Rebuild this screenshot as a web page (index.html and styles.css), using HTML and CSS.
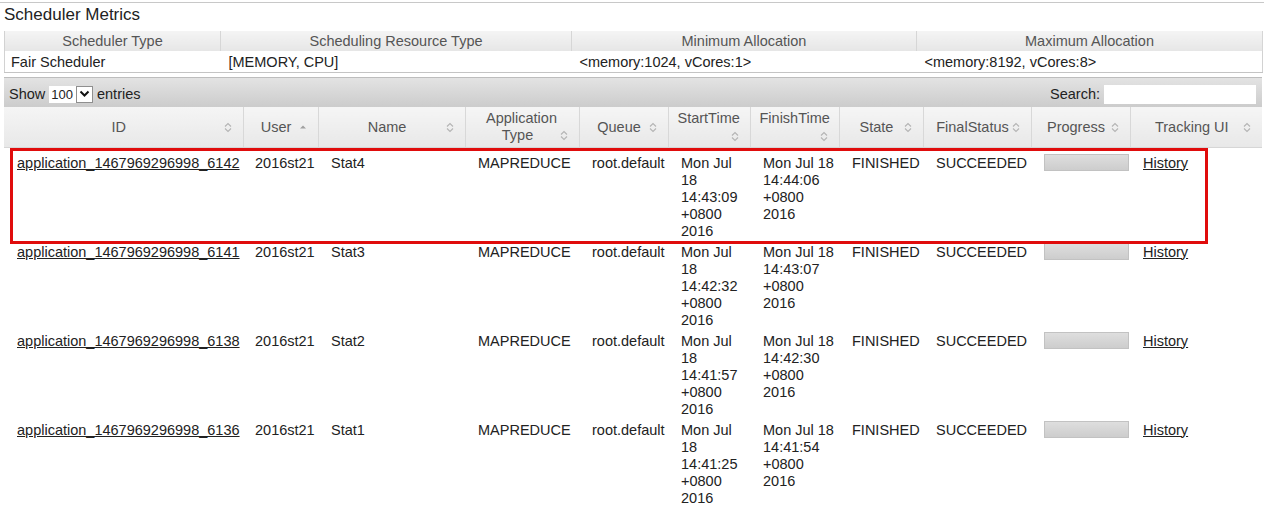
FILE: index.html
```html
<!DOCTYPE html>
<html>
<head>
<meta charset="utf-8">
<title>Scheduler</title>
<link rel="stylesheet" href="styles.css">
</head>
<body>
<div class="topline"></div>
<div class="wrap">
  <h3 class="title">Scheduler Metrics</h3>
  <table class="metrics">
    <colgroup><col class="m1"><col class="m2"><col class="m3"><col class="m4"></colgroup>
    <thead>
      <tr><th>Scheduler Type</th><th>Scheduling Resource Type</th><th>Minimum Allocation</th><th>Maximum Allocation</th></tr>
    </thead>
    <tbody>
      <tr><td>Fair Scheduler</td><td>[MEMORY, CPU]</td><td>&lt;memory:1024, vCores:1&gt;</td><td>&lt;memory:8192, vCores:8&gt;</td></tr>
    </tbody>
  </table>

  <div class="toolbar">
    <div class="len">Show <span class="sel"><span class="sel-val">100</span><span class="sel-btn"><svg width="11" height="8" viewBox="0 0 11 8"><path d="M1.5 1.5 L5.5 5.5 L9.5 1.5" fill="none" stroke="#111" stroke-width="2"/></svg></span></span> entries</div>
    <div class="search">Search: <span class="search-box"></span></div>
  </div>

  <div class="grid">
    <table class="apps">
      <colgroup>
        <col class="c-id"><col class="c-user"><col class="c-name"><col class="c-type"><col class="c-queue"><col class="c-start"><col class="c-finish"><col class="c-state"><col class="c-final"><col class="c-prog"><col class="c-track">
      </colgroup>
      <thead>
        <tr>
          <th><span class="sort fr"><svg width="8" height="11" viewBox="0 0 8 11"><path d="M1 4.5 L4 1.5 L7 4.5 M1 6.5 L4 9.5 L7 6.5" fill="none" stroke="#b4b4b4" stroke-width="1.1"/></svg></span>ID</th>
          <th><span class="sort fr"><svg width="8" height="11" viewBox="0 0 8 11"><path d="M1 6.5 L4 3.5 L7 6.5 Z" fill="#a0a0a0"/></svg></span>User</th>
          <th><span class="sort fr"><svg width="8" height="11" viewBox="0 0 8 11"><path d="M1 4.5 L4 1.5 L7 4.5 M1 6.5 L4 9.5 L7 6.5" fill="none" stroke="#b4b4b4" stroke-width="1.1"/></svg></span>Name</th>
          <th>Application<br><span class="sort fr"><svg width="8" height="11" viewBox="0 0 8 11"><path d="M1 4.5 L4 1.5 L7 4.5 M1 6.5 L4 9.5 L7 6.5" fill="none" stroke="#b4b4b4" stroke-width="1.1"/></svg></span>Type</th>
          <th><span class="sort fr"><svg width="8" height="11" viewBox="0 0 8 11"><path d="M1 4.5 L4 1.5 L7 4.5 M1 6.5 L4 9.5 L7 6.5" fill="none" stroke="#b4b4b4" stroke-width="1.1"/></svg></span>Queue</th>
          <th class="narrow">StartTime<span class="sort blk"><svg width="8" height="11" viewBox="0 0 8 11"><path d="M1 4.5 L4 1.5 L7 4.5 M1 6.5 L4 9.5 L7 6.5" fill="none" stroke="#b4b4b4" stroke-width="1.1"/></svg></span></th>
          <th class="narrow">FinishTime<span class="sort blk"><svg width="8" height="11" viewBox="0 0 8 11"><path d="M1 4.5 L4 1.5 L7 4.5 M1 6.5 L4 9.5 L7 6.5" fill="none" stroke="#b4b4b4" stroke-width="1.1"/></svg></span></th>
          <th><span class="sort fr"><svg width="8" height="11" viewBox="0 0 8 11"><path d="M1 4.5 L4 1.5 L7 4.5 M1 6.5 L4 9.5 L7 6.5" fill="none" stroke="#b4b4b4" stroke-width="1.1"/></svg></span>State</th>
          <th><span class="sort fr"><svg width="8" height="11" viewBox="0 0 8 11"><path d="M1 4.5 L4 1.5 L7 4.5 M1 6.5 L4 9.5 L7 6.5" fill="none" stroke="#b4b4b4" stroke-width="1.1"/></svg></span>FinalStatus</th>
          <th><span class="sort fr"><svg width="8" height="11" viewBox="0 0 8 11"><path d="M1 4.5 L4 1.5 L7 4.5 M1 6.5 L4 9.5 L7 6.5" fill="none" stroke="#b4b4b4" stroke-width="1.1"/></svg></span>Progress</th>
          <th><span class="sort fr"><svg width="8" height="11" viewBox="0 0 8 11"><path d="M1 4.5 L4 1.5 L7 4.5 M1 6.5 L4 9.5 L7 6.5" fill="none" stroke="#b4b4b4" stroke-width="1.1"/></svg></span>Tracking UI</th>
        </tr>
      </thead>
      <tbody>
        <tr class="first">
          <td><a href="#">application_1467969296998_6142</a></td>
          <td>2016st21</td>
          <td>Stat4</td>
          <td>MAPREDUCE</td>
          <td>root.default</td>
          <td>Mon Jul 18 14:43:09 +0800 2016</td>
          <td>Mon Jul 18 14:44:06 +0800 2016</td>
          <td>FINISHED</td>
          <td>SUCCEEDED</td>
          <td><div class="bar"></div></td>
          <td><a href="#">History</a></td>
        </tr>
        <tr>
          <td><a href="#">application_1467969296998_6141</a></td>
          <td>2016st21</td>
          <td>Stat3</td>
          <td>MAPREDUCE</td>
          <td>root.default</td>
          <td>Mon Jul 18 14:42:32 +0800 2016</td>
          <td>Mon Jul 18 14:43:07 +0800 2016</td>
          <td>FINISHED</td>
          <td>SUCCEEDED</td>
          <td><div class="bar"></div></td>
          <td><a href="#">History</a></td>
        </tr>
        <tr>
          <td><a href="#">application_1467969296998_6138</a></td>
          <td>2016st21</td>
          <td>Stat2</td>
          <td>MAPREDUCE</td>
          <td>root.default</td>
          <td>Mon Jul 18 14:41:57 +0800 2016</td>
          <td>Mon Jul 18 14:42:30 +0800 2016</td>
          <td>FINISHED</td>
          <td>SUCCEEDED</td>
          <td><div class="bar"></div></td>
          <td><a href="#">History</a></td>
        </tr>
        <tr>
          <td><a href="#">application_1467969296998_6136</a></td>
          <td>2016st21</td>
          <td>Stat1</td>
          <td>MAPREDUCE</td>
          <td>root.default</td>
          <td>Mon Jul 18 14:41:25 +0800 2016</td>
          <td>Mon Jul 18 14:41:54 +0800 2016</td>
          <td>FINISHED</td>
          <td>SUCCEEDED</td>
          <td><div class="bar"></div></td>
          <td><a href="#">History</a></td>
        </tr>
      </tbody>
    </table>
    <div class="highlight"></div>
  </div>
</div>
</body>
</html>
```
FILE: styles.css
```css
html, body {
  margin: 0;
  padding: 0;
  background: #fff;
  overflow: hidden;
}
body {
  font-family: "Liberation Sans", Arial, sans-serif;
  font-size: 14.5px;
  color: #222;
}
.topline {
  margin-top: 2px;
  width: 1264px;
  border-top: 1px solid #c8c8c8;
}
.wrap {
  width: 1258px;
  margin-left: 4px;
}
.title {
  margin: 0;
  padding: 3px 0 7px 0;
  font-size: 17px;
  line-height: 18px;
  font-weight: normal;
  color: #222;
}

/* metrics table */
.metrics {
  width: 1258px;
  table-layout: fixed;
  border-collapse: collapse;
  border-left: 1px solid #d2d2d2;
  border-right: 1px solid #d2d2d2;
}
.m1 { width: 216px; }
.m2 { width: 351px; }
.m3 { width: 345px; }
.m4 { width: 346px; }
.metrics th {
  height: 20px;
  padding: 0;
  font-weight: normal;
  color: #555;
  line-height: 19px;
  text-align: center;
  background: linear-gradient(#f4f4f4, #e6e6e6);
  border-right: 1px solid #d6d6d6;
}
.metrics td {
  height: 21px;
  padding: 0 8px;
  line-height: 20px;
  border-bottom: 1px solid #c4c4c4;
  color: #222;
}
.metrics td:first-child { padding-left: 6px; }

/* toolbar */
.toolbar {
  margin-top: 4px;
  height: 30px;
  box-sizing: border-box;
  display: flex;
  align-items: center;
  justify-content: space-between;
  padding: 3px 6px 0 5px;
  background: linear-gradient(#e3e3e3, #cccccc);
  border-top: 1px solid #bdbdbd;
  color: #222;
}
.len {
  display: flex;
  align-items: center;
}
.sel {
  display: inline-flex;
  align-items: stretch;
  height: 17px;
  margin: 0 4px 0 4px;
  font-size: 13px;
}
.sel-val {
  background: #fff;
  padding: 0 3px 0 2px;
  line-height: 17px;
}
.sel-btn {
  width: 17px;
  background: #fff;
  border: 1px solid #8f8f8f;
  box-sizing: border-box;
  display: flex;
  align-items: center;
  justify-content: center;
}
.search {
  display: flex;
  align-items: center;
}
.search-box {
  display: inline-block;
  width: 152px;
  height: 19px;
  margin-left: 4px;
  background: #fff;
}

/* apps table */
.grid {
  position: relative;
}
.apps {
  width: 1258px;
  table-layout: fixed;
  border-collapse: collapse;
}
.c-id { width: 239px; }
.c-user { width: 75px; }
.c-name { width: 147px; }
.c-type { width: 114px; }
.c-queue { width: 89px; }
.c-start { width: 82px; }
.c-finish { width: 89px; }
.c-state { width: 84px; }
.c-final { width: 108px; }
.c-prog { width: 99px; }
.c-track { width: 132px; }

.apps th {
  height: 40px;
  box-sizing: border-box;
  padding: 3px 11px 2px 10px;
  font-weight: normal;
  color: #555;
  line-height: 17px;
  text-align: center;
  vertical-align: middle;
  background: linear-gradient(#f5f5f5, #e8e8e8);
  border-left: 1px solid #d8d8d8;
  border-bottom: 1px solid #d6d6d6;
}
.apps th:first-child { border-left: none; }
.apps th.narrow { padding-left: 9px; padding-right: 10px; }
.sort svg { display: inline-block; vertical-align: middle; }
.sort.fr {
  float: right;
  width: 8px;
  height: 17px;
  display: flex;
  align-items: center;
}
.sort.blk {
  display: block;
  text-align: right;
  height: 17px;
  line-height: 17px;
  margin-right: 1px;
}

.apps td {
  padding: 2px 1px 2px 13px;
  line-height: 17px;
  vertical-align: top;
  color: #222;
  overflow: visible;
}
.apps td:nth-child(2) { padding-left: 12px; }
.apps tr.first td { padding-top: 7px; }
.apps td a {
  color: #222;
  text-decoration: underline;
}
.bar {
  width: 85px;
  height: 17px;
  box-sizing: border-box;
  margin-top: -1px;
  border: 1px solid #c2c2c2;
  background: linear-gradient(#dedede, #cdcdcd);
}

/* annotation overlay */
.highlight {
  position: absolute;
  left: 6px;
  top: 41px;
  width: 1198px;
  height: 96px;
  box-sizing: border-box;
  border: 3px solid #e00c0c;
  pointer-events: none;
}
```
